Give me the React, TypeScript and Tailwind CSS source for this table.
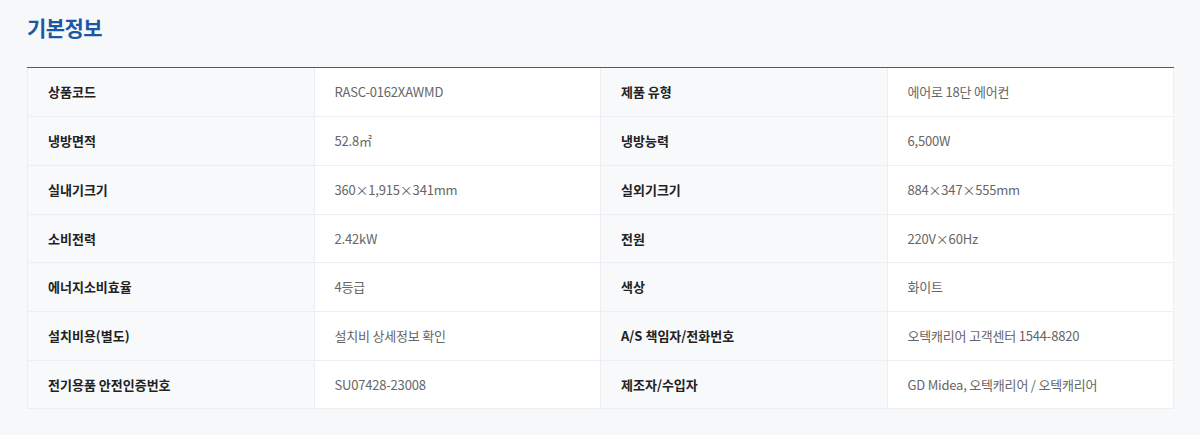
const ROWS: [string, string, string, string][] = [
  ["상품코드", "RASC-0162XAWMD", "제품 유형", "에어로 18단 에어컨"],
  ["냉방면적", "52.8㎡", "냉방능력", "6,500W"],
  ["실내기크기", "360×1,915×341mm", "실외기크기", "884×347×555mm"],
  ["소비전력", "2.42kW", "전원", "220V×60Hz"],
  ["에너지소비효율", "4등급", "색상", "화이트"],
  ["설치비용(별도)", "설치비 상세정보 확인", "A/S 책임자/전화번호", "오텍캐리어 고객센터 1544-8820"],
  ["전기용품 안전인증번호", "SU07428-23008", "제조자/수입자", "GD Midea, 오텍캐리어 / 오텍캐리어"],
];

export default function App() {
  return (
    <main
      className="min-h-screen w-full bg-[#f7f8fa] px-[27px] pt-[12px]"
      style={{ fontFamily: '"Noto Sans CJK KR", "Noto Sans", sans-serif' }}
    >
      <h2 className="text-[21px] font-bold leading-[30px] tracking-[-0.6px] text-[#1b58a4]">기본정보</h2>

      <div className="mt-[25px] w-[1147px] border-t-[1.5px] border-[#2b62a8]">
        <table className="w-full table-fixed border-collapse">
          <tbody>
            {ROWS.map(([l1, v1, l2, v2], i) => {
              const top = i === 0 ? "border-t-0" : "";
              return (
                <tr key={l1} className="h-[48.7px]">
                  <th className={`border border-[#eceef1] ${top} bg-[#f8f9fb] px-5 text-left text-[13px] font-bold text-[#222]`}>
                    {l1}
                  </th>
                  <td className={`border border-[#eceef1] ${top} bg-white px-5 text-[13px] tracking-[-0.2px] text-[#666]`}>
                    {v1}
                  </td>
                  <th className={`border border-[#eceef1] ${top} bg-[#f8f9fb] px-5 text-left text-[13px] font-bold text-[#222]`}>
                    {l2}
                  </th>
                  <td className={`border border-[#eceef1] ${top} bg-white px-5 text-[13px] tracking-[-0.2px] text-[#666]`}>
                    {v2}
                  </td>
                </tr>
              );
            })}
          </tbody>
        </table>
      </div>
    </main>
  );
}
